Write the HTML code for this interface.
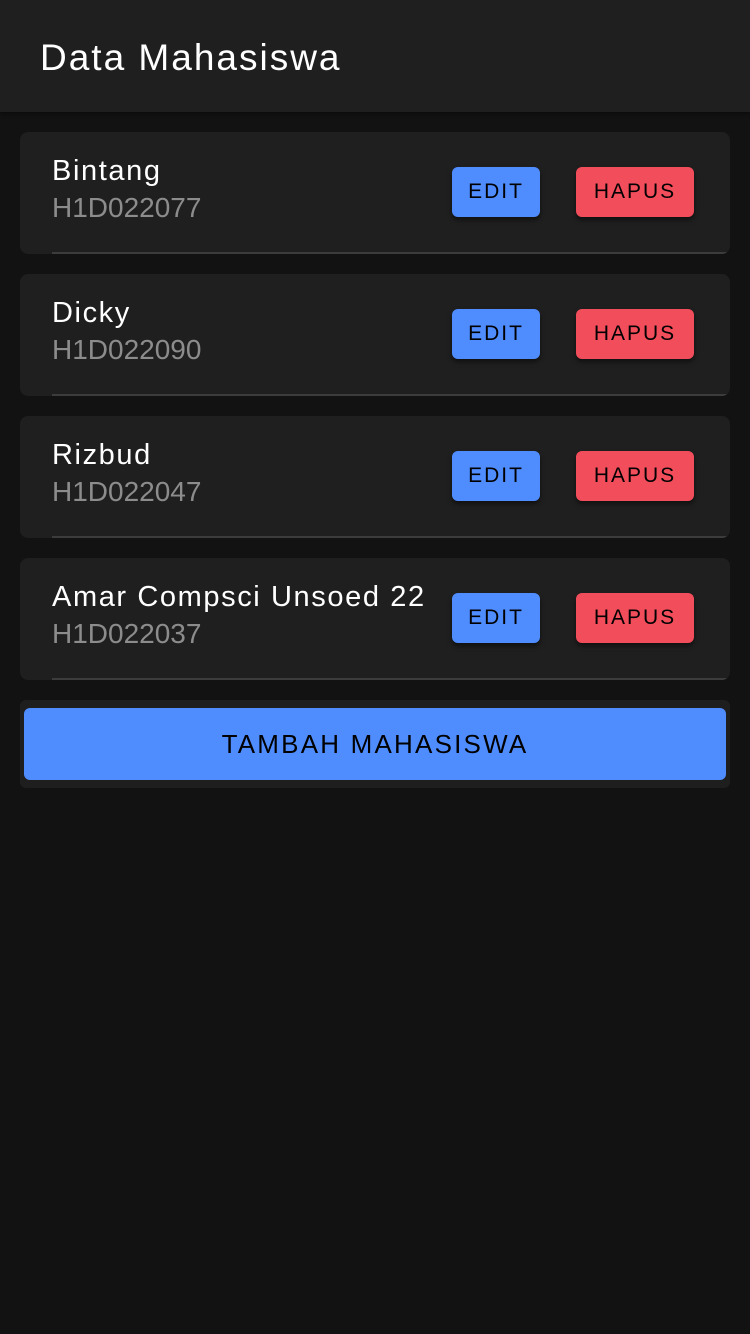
<!DOCTYPE html>
<html><head><style>
body{margin:0;width:750px;height:1334px;background:#121212;font-family:"Liberation Sans",sans-serif;position:relative;overflow:hidden}
.hdr{position:absolute;left:0;top:0;width:750px;height:112px;background:#1f1f1f;box-shadow:0 2px 4px rgba(0,0,0,.4)}
.hdr span{position:absolute;left:40px;top:37px;font-size:37px;letter-spacing:2px;color:#fff;line-height:42px}
.card{position:absolute;left:20px;width:710px;height:122px;background:#1f1f1f;border-radius:8px;overflow:hidden}
.card .ln{position:absolute;left:32px;right:0;bottom:0;height:2px;background:#3c3c3c}
.nm{position:absolute;left:32px;top:21px;font-size:29px;letter-spacing:1.6px;color:#fff;line-height:36px}
.id{position:absolute;left:32px;top:59px;font-size:28px;color:#8c8c8c;line-height:34px}
.b{position:absolute;top:35px;height:50px;border-radius:6px;font-size:21px;letter-spacing:2px;color:#000;display:flex;align-items:center;justify-content:center;box-shadow:0 3px 5px rgba(0,0,0,.5)}
.e{left:432px;width:88px;background:#4f8dff}
.h{left:556px;width:118px;background:#f24d5b}
.add{position:absolute;left:20px;top:700px;width:710px;height:88px;background:#1e1e1e;border-radius:6px}
.add div{position:absolute;left:4px;top:8px;width:702px;height:72px;background:#4f8dff;border-radius:6px;font-size:26px;letter-spacing:2.2px;color:#000;display:flex;align-items:center;justify-content:center}
</style></head><body>
<div class="hdr"><span>Data Mahasiswa</span></div>
<div class="card" style="top:132px"><div class="nm">Bintang</div><div class="id">H1D022077</div><div class="b e">EDIT</div><div class="b h">HAPUS</div><div class="ln"></div></div>
<div class="card" style="top:274px"><div class="nm">Dicky</div><div class="id">H1D022090</div><div class="b e">EDIT</div><div class="b h">HAPUS</div><div class="ln"></div></div>
<div class="card" style="top:416px"><div class="nm">Rizbud</div><div class="id">H1D022047</div><div class="b e">EDIT</div><div class="b h">HAPUS</div><div class="ln"></div></div>
<div class="card" style="top:558px"><div class="nm">Amar Compsci Unsoed 22</div><div class="id">H1D022037</div><div class="b e">EDIT</div><div class="b h">HAPUS</div><div class="ln"></div></div>
<div class="add"><div>TAMBAH MAHASISWA</div></div>
</body></html>
